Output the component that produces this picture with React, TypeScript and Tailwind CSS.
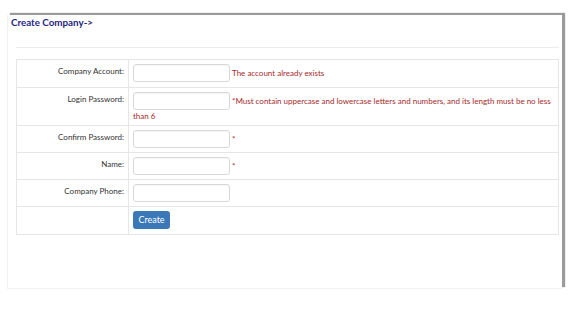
const font = { fontFamily: 'Lato, "Open Sans", sans-serif' }

function Row({ label, children, h = '' }: { label: string; children?: React.ReactNode; h?: string }) {
  return (
    <tr className={`border-t border-[#e6e6e6] ${h}`}>
      <td className="w-[112px] border-r border-[#e6e6e6] pr-[4px] pt-[5px] text-right align-top text-[8px] leading-[12px] text-[#333]">
        {label}
      </td>
      <td className="px-[4px] pt-[4px] pb-[4px] align-top text-[8px] leading-[10px]">{children}</td>
    </tr>
  )
}

function Field({ note }: { note?: string }) {
  return (
    <>
      <input
        type="text"
        className="inline-block h-[18px] w-[97px] rounded-[3px] border border-[#d9d9d9] bg-white align-middle shadow-[inset_0_1px_1px_rgba(0,0,0,0.04)]"
      />
      {note && <span className="ml-[2px] align-middle text-[#a52a2a]">{note}</span>}
    </>
  )
}

export default function App() {
  return (
    <div className="h-[313px] w-[577px] bg-white pl-[7px] pt-[15px]" style={font}>
      <div className="h-[274px] w-[555px] border-b border-l border-[#f2f2f2] bg-white shadow-[3px_-2px_1px_#9a9a9a]">
        <div className="pl-[3px] pt-[1px] text-[9.8px] font-bold leading-[12px] text-[#1f2680]">Create Company-&gt;</div>
        <div className="ml-[8px] mr-[3px] mt-[19px] border-t border-[#ececec]" />
        <table className="ml-[8px] mt-[11px] w-[543px] border-collapse border border-[#e6e6e6]">
          <tbody>
            <Row label="Company Account:" h="h-[28px]">
              <Field note="The account already exists" />
            </Row>
            <Row label="Login Password:" h="h-[37px]">
              <Field note="*Must contain uppercase and lowercase letters and numbers, and its length must be no less than 6" />
            </Row>
            <Row label="Confirm Password:">
              <Field note="*" />
            </Row>
            <Row label="Name:">
              <Field note="*" />
            </Row>
            <Row label="Company Phone:">
              <Field />
            </Row>
            <Row label="" h="h-[28px]">
              <button className="h-[18px] w-[37px] rounded-[3px] bg-[#3a78b8] align-middle text-[9px] text-white">Create</button>
            </Row>
          </tbody>
        </table>
      </div>
    </div>
  )
}
